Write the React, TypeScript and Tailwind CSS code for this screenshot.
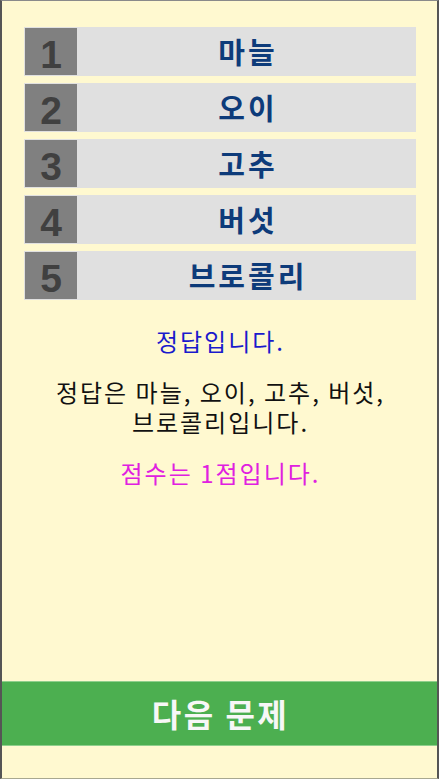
import React from 'react';

const items = ['마늘', '오이', '고추', '버섯', '브로콜리'];

const App: React.FC = () => {
  return (
    <div
      className="w-[439px] h-[779px] bg-[#fff9d0] flex flex-col border-l-2 border-r-2 border-t border-b border-l-[#555555] border-r-[#555555] border-t-[#8a8a8a] border-b-[#a8a890]"
      style={{ fontFamily: '"Noto Sans CJK KR", "Noto Sans", sans-serif' }}
    >
      {/* Answer rows */}
      <div className="flex flex-col gap-[7px] pt-[26px] pl-[22px] pr-[21px]">
        {items.map((item, i) => (
          <div key={item} className="flex h-[49px] bg-[#e0e0e0] p-px">
            <div
              className="w-[52px] bg-[#808080] flex items-end justify-center pb-px text-[39px] leading-none font-bold text-[#404040]"
              style={{ fontFamily: '"Liberation Sans", Arial, sans-serif' }}
            >
              {i + 1}
            </div>
            <div className="flex-1 flex items-center justify-center pl-[4px] text-[29px] tracking-[3px] font-bold text-[#0d3b7a] leading-none pb-px">
              {item}
            </div>
          </div>
        ))}
      </div>

      {/* Result */}
      <div className="flex flex-col items-center text-center mt-[26px] pl-[2px] text-[24px] leading-[30px] tracking-[2px]">
        <div className="text-[#1a1acc]">정답입니다.</div>
        <div className="mt-[21px] text-[#111111]">
          정답은 마늘, 오이, 고추, 버섯,
          <br />
          브로콜리입니다.
        </div>
        <div className="mt-[21px] text-[#e020e0]">점수는 1점입니다.</div>
      </div>

      <div className="flex-1" />

      {/* Next button */}
      <button className="h-[65px] w-full bg-[#4caf50] border-t border-b border-[#8fcf8c] flex items-center justify-center pl-[2px] text-[32px] tracking-[2.5px] font-bold text-[#f7f7f7] leading-none pb-[2px]">
        다음 문제
      </button>
      <div className="h-[32px]" />
    </div>
  );
};

export default App;
